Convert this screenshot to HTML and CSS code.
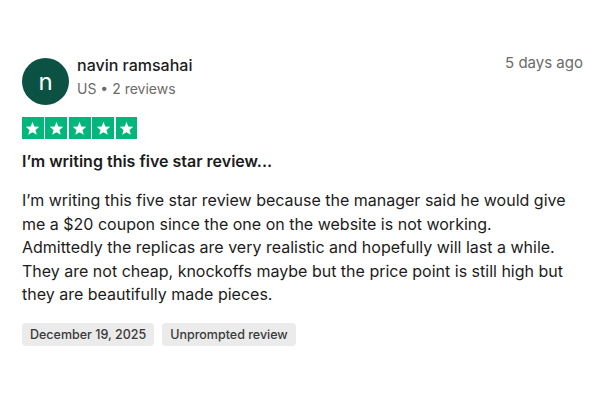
FILE: index.html
```html
<!DOCTYPE html>
<html lang="en">
<head>
<meta charset="utf-8">
<link rel="stylesheet" href="styles.css">
</head>
<body>
<article class="review">
  <header class="head">
    <div class="avatar">n</div>
    <div class="who">
      <div class="name">navin ramsahai</div>
      <div class="meta">US • 2 reviews</div>
    </div>
    <div class="when">5 days ago</div>
  </header>
  <div class="stars">
    <span class="star"><svg viewBox="0 0 24 24"><path d="M12 3.6l2.3 5.9 6.3.4-4.8 4 1.6 6.1L12 16.6 6.6 20l1.6-6.1-4.8-4 6.3-.4z" fill="#fff"/></svg></span>
    <span class="star"><svg viewBox="0 0 24 24"><path d="M12 3.6l2.3 5.9 6.3.4-4.8 4 1.6 6.1L12 16.6 6.6 20l1.6-6.1-4.8-4 6.3-.4z" fill="#fff"/></svg></span>
    <span class="star"><svg viewBox="0 0 24 24"><path d="M12 3.6l2.3 5.9 6.3.4-4.8 4 1.6 6.1L12 16.6 6.6 20l1.6-6.1-4.8-4 6.3-.4z" fill="#fff"/></svg></span>
    <span class="star"><svg viewBox="0 0 24 24"><path d="M12 3.6l2.3 5.9 6.3.4-4.8 4 1.6 6.1L12 16.6 6.6 20l1.6-6.1-4.8-4 6.3-.4z" fill="#fff"/></svg></span>
    <span class="star"><svg viewBox="0 0 24 24"><path d="M12 3.6l2.3 5.9 6.3.4-4.8 4 1.6 6.1L12 16.6 6.6 20l1.6-6.1-4.8-4 6.3-.4z" fill="#fff"/></svg></span>
  </div>
  <h2 class="title">I’m writing this five star review...</h2>
  <p class="body">I’m writing this five star review because the manager said he would give me a $20 coupon since the one on the website is not working.<br>Admittedly the replicas are very realistic and hopefully will last a while.<br>They are not cheap, knockoffs maybe but the price point is still high but they are beautifully made pieces.</p>
  <div class="tags">
    <span class="tag">December 19, 2025</span>
    <span class="tag">Unprompted review</span>
  </div>
</article>
</body>
</html>
```
FILE: styles.css
```css
html, body { margin: 0; padding: 0; background: #fff; }
body {
  font-family: Inter, "Noto Sans", sans-serif;
  color: #1c1c1c;
  width: 600px;
  height: 400px;
  overflow: hidden;
}
.review { padding: 52px 17px 0 22px; }
.head { display: flex; align-items: flex-start; }
.avatar {
  width: 47px; height: 47px; border-radius: 50%;
  background: #0b5144; color: #fff;
  display: flex; align-items: center; justify-content: center;
  font-size: 24px; font-weight: 400;
  margin-top: 6px;
}
.who { margin-left: 8px; flex: 1; }
.name { font-size: 16px; font-weight: 500; line-height: 22px; margin-top: 2px; }
.meta { font-size: 14px; color: #6b6b6b; line-height: 20px; margin-top: 3px; }
.when { font-size: 15px; color: #6b6b6b; line-height: 20px; margin-top: 1px; }
.stars { display: flex; gap: 1.6px; margin-top: 12px; }
.star { width: 21.8px; height: 22px; background: #00b67a; display: flex; align-items: center; justify-content: center; }
.star svg { width: 19px; height: 19px; }
.title { font-size: 16px; font-weight: 600; margin: 11px 0 0; line-height: 22px; }
.body { font-size: 16px; line-height: 23.6px; margin: 17px 0 0; }
.tags { display: flex; gap: 8px; margin-top: 16px; }
.tag { background: #ebebeb; border-radius: 4px; font-size: 12.5px; font-weight: 500; color: #3a3a3a; padding: 3px 8px; line-height: 17px; }
```
